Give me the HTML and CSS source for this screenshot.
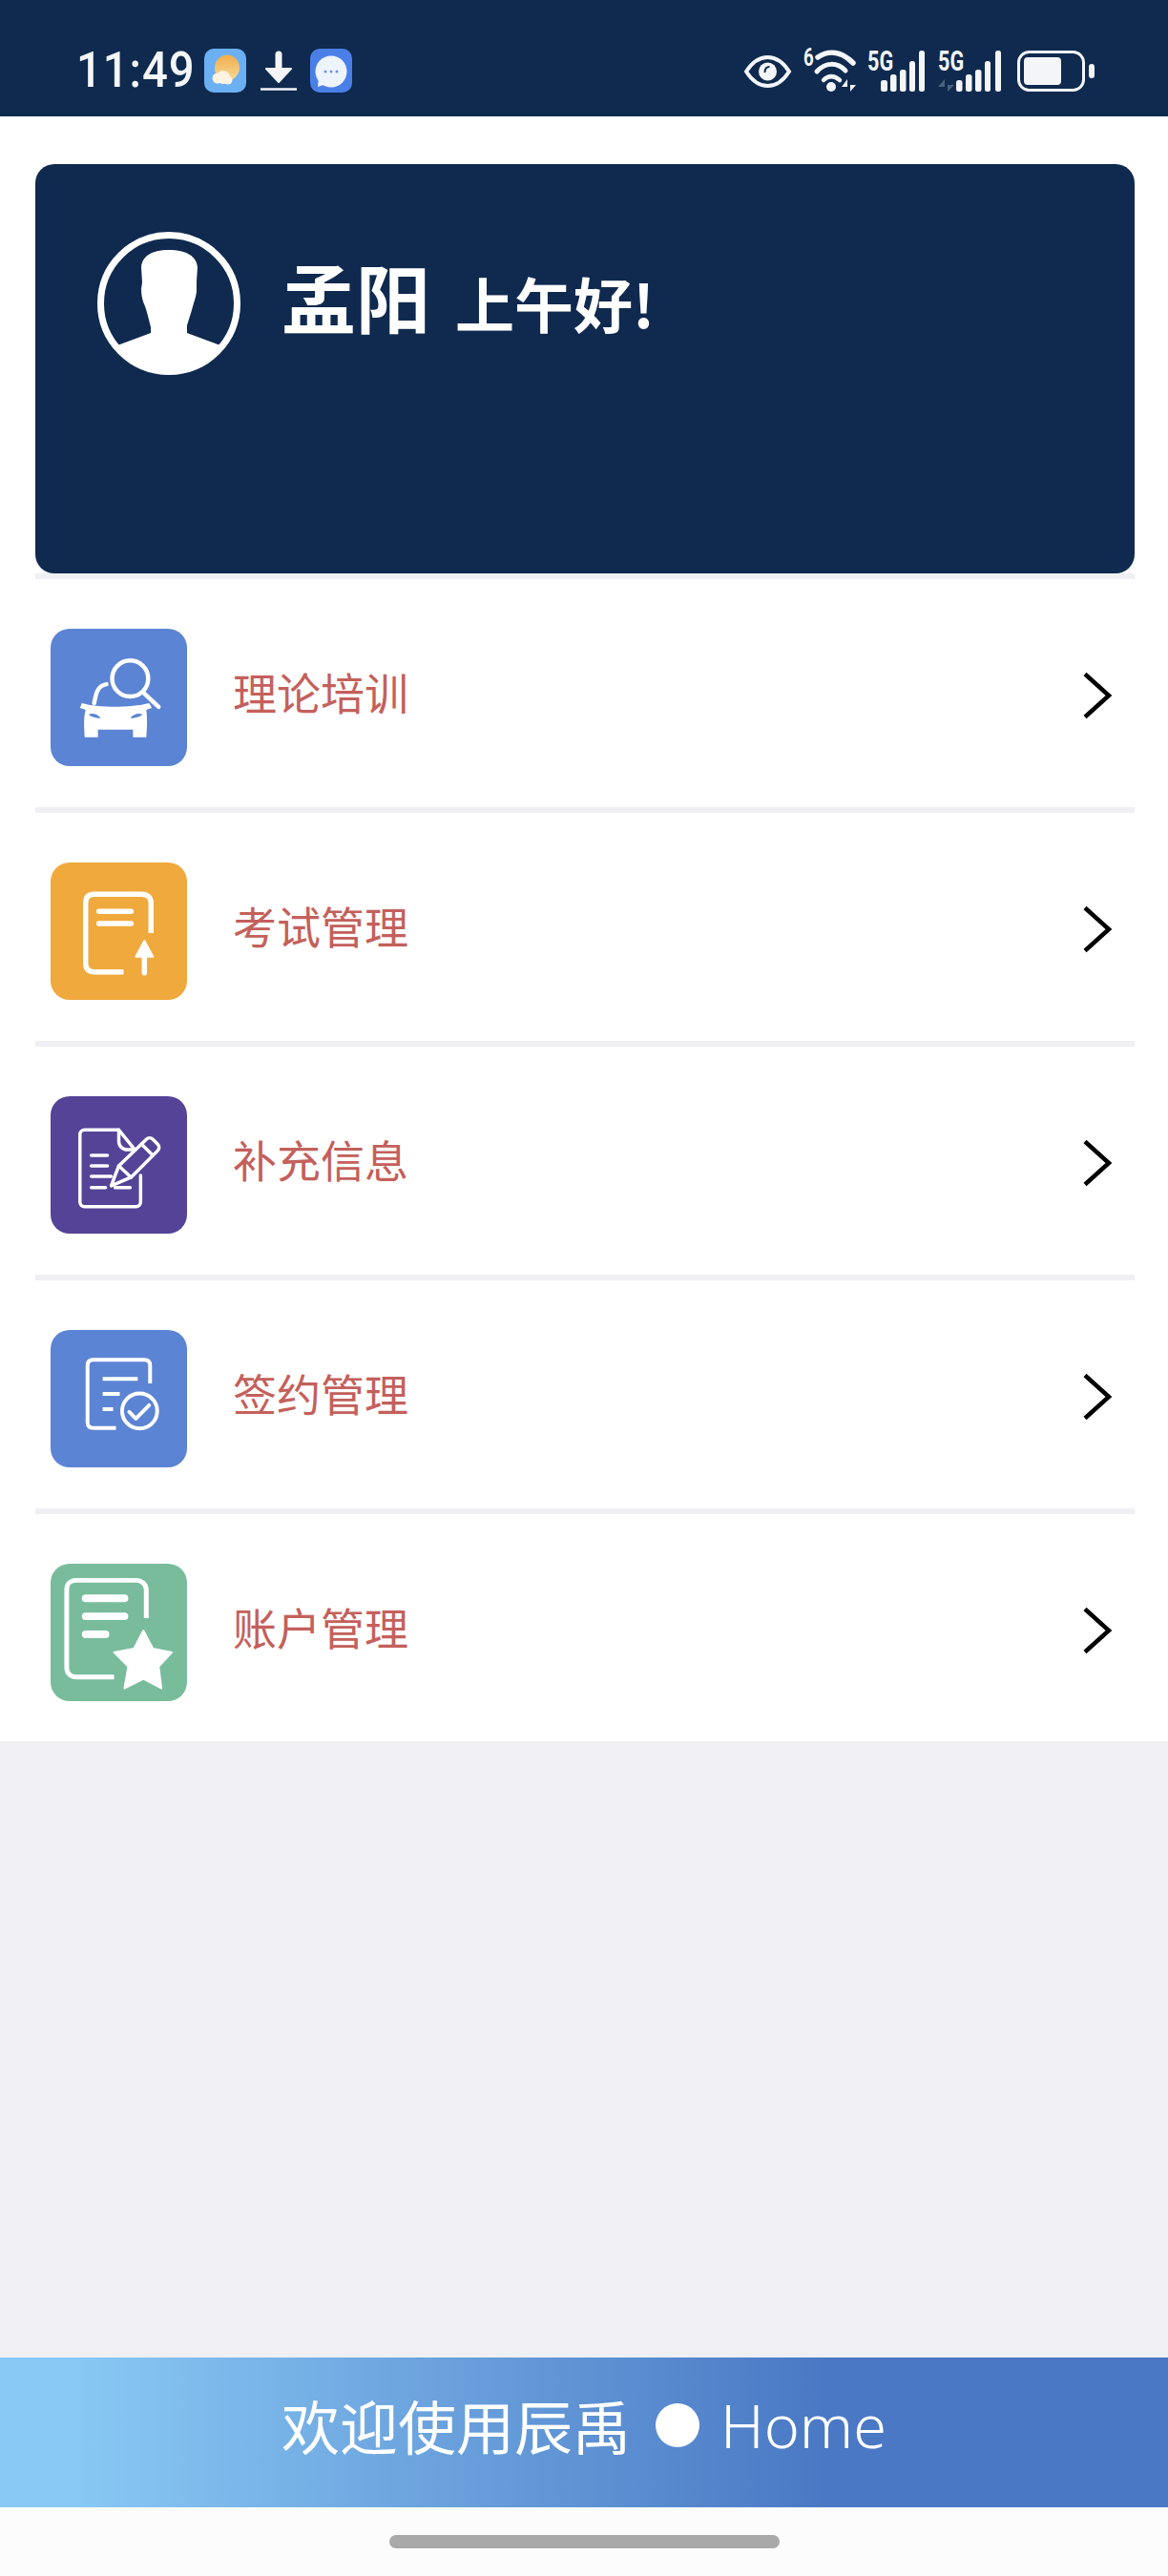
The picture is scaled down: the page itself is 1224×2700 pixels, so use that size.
FILE: index.html
```html
<!DOCTYPE html>
<html lang="zh-CN">
<head>
    <meta charset="UTF-8">
    <meta name="viewport" content="width=device-width, initial-scale=1.0">
    <title>辰禹 Home</title>
    <link rel="stylesheet" href="styles.css">
</head>
<body>

    <!-- status bar -->
    <div class="status-bar">
        <div class="status-left">
            <span class="clock">11:49</span>
            <svg class="st-app" viewBox="0 0 44 46">
                <defs>
                    <linearGradient id="sunFill" x1="0" y1="0" x2="0" y2="1">
                        <stop offset="0" stop-color="#efae4c"/>
                        <stop offset="1" stop-color="#f8d896"/>
                    </linearGradient>
                </defs>
                <rect width="44" height="46" rx="10" fill="#6cb0f4"/>
                <ellipse cx="24" cy="20" rx="13" ry="13.500" fill="url(#sunFill)"/>
                <circle cx="14" cy="31" r="5.500" fill="#fdf3e2"/>
                <circle cx="20" cy="30" r="7" fill="#fdf3e2"/>
                <circle cx="25" cy="33" r="4.500" fill="#fdf3e2"/>
            </svg>
            <svg class="st-download" viewBox="0 0 38 41">
                <path d="M19 3v16" stroke="#f3f5f8" stroke-width="7" stroke-linecap="round"/>
                <path d="M6 18h26L19 32z" fill="#f3f5f8" stroke="#f3f5f8" stroke-width="2" stroke-linejoin="round"/>
                <path d="M0 39.500h38" stroke="#f3f5f8" stroke-width="2.500"/>
            </svg>
            <svg class="st-app" viewBox="0 0 44 46">
                <rect width="44" height="46" rx="10" fill="#4b7fe8"/>
                <circle cx="22" cy="24" r="16.500" fill="#eef4fd"/>
                <path d="M9 30l-1 10 9-3z" fill="#eef4fd"/>
                <circle cx="16" cy="24" r="1.500" fill="#6b96ea"/>
                <circle cx="22" cy="24" r="1.500" fill="#6b96ea"/>
                <circle cx="28" cy="24" r="1.500" fill="#6b96ea"/>
            </svg>
        </div>
        <div class="status-right">
            <svg class="st-eye" viewBox="0 0 49 46">
                <path d="M2 24C9 13 16 9 24.500 9S40 13 47 24C40 35 33 39 24.500 39S9 35 2 24z" fill="none" stroke="#f3f5f8" stroke-width="4"/>
                <circle cx="24.500" cy="24" r="9.500" fill="#f3f5f8"/>
                <path d="M21.500 25c0-4 2-6 5-6" fill="none" stroke="#0f2a4e" stroke-width="2"/>
            </svg>
            <svg class="st-wifi" viewBox="0 0 55 46">
                <text class="st-tiny" transform="translate(0 18) scale(.72 1)">6</text>
                <path d="M15 9C27 1 40 3 52 15" fill="none" stroke="#f3f5f8" stroke-width="5.500" stroke-linecap="round"/>
                <path d="M14 24C23 14 35 14 44 23" fill="none" stroke="#f3f5f8" stroke-width="5" stroke-linecap="round"/>
                <path d="M21 33c5-5 11-5 17 0" fill="none" stroke="#f3f5f8" stroke-width="4.500" stroke-linecap="round"/>
                <circle cx="29" cy="40" r="5" fill="#f3f5f8"/>
                <path d="M46 45V32l-6 8h6zM49 32v13l6-7h-6z" fill="#f3f5f8"/>
            </svg>
            <svg class="st-signal" viewBox="0 0 61 46">
                <text class="st-tiny st-5g" transform="translate(0 23) scale(.72 1)">5G</text>
                <rect x="14" y="33" width="7" height="12" rx="2.500" fill="#f3f5f8"/>
                <rect x="24" y="27" width="6.500" height="18" rx="2.500" fill="#f3f5f8"/>
                <rect x="34" y="22" width="6.500" height="23" rx="2.500" fill="#f3f5f8"/>
                <rect x="44" y="13" width="6" height="32" rx="2.500" fill="#f3f5f8"/>
                <rect x="54" y="2" width="6" height="43" rx="2.500" fill="#f3f5f8"/>
            </svg>
            <svg class="st-signal-b" viewBox="0 0 66 46">
                <text class="st-tiny st-5g" transform="translate(0 23) scale(.72 1)">5G</text>
                <path d="M7 45V32l-7 8h7zM10 32v13l7-7h-7z" fill="#4a5f7d"/>
                <rect x="19" y="33" width="6.500" height="12" rx="2.500" fill="#f3f5f8"/>
                <rect x="29" y="27" width="6.500" height="18" rx="2.500" fill="#f3f5f8"/>
                <rect x="39" y="22" width="6.500" height="23" rx="2.500" fill="#f3f5f8"/>
                <rect x="49" y="13" width="6" height="32" rx="2.500" fill="#f3f5f8"/>
                <rect x="60" y="2" width="6" height="43" rx="2.500" fill="#f3f5f8"/>
            </svg>
            <svg class="st-battery" viewBox="0 0 81 46">
                <rect x="1.500" y="3.500" width="68" height="40" rx="11" fill="none" stroke="#f3f5f8" stroke-width="3"/>
                <rect x="7" y="9" width="39" height="29" rx="4" fill="#f3f5f8"/>
                <rect x="75" y="16" width="6" height="15" rx="3" fill="#f3f5f8"/>
            </svg>
        </div>
    </div>

    <div class="content">
        <!-- user card -->
        <div class="user-card">
            <svg class="avatar" viewBox="0 0 150 150">
                <circle cx="75" cy="75" r="71.500" fill="none" stroke="#fff" stroke-width="7"/>
                <path d="M21 119L56 106V100C54 92 52 84 50 78 47 72 46 66 46 60L47 53 46 37C47 26 56 19 75 19 94 19 104 26 105 37L104 52V63C103 70 100 77 99 82L94 98V106L129 119A70 70 0 0 1 21 119z" fill="#fff"/>
            </svg>
            <div class="greeting">
                <span class="user-name">孟阳</span>
                <span class="user-hello">上午好!</span>
            </div>
        </div>

        <!-- menu -->
        <div class="menu">
            <div class="menu-row">
                <div class="menu-icon icon-blue">
                    <svg viewBox="0 0 144 144">
                        <circle cx="84" cy="52" r="19" fill="none" stroke="#fff" stroke-width="4.500"/>
                        <path d="M98 67l16 15" stroke="#fff" stroke-width="4.500" stroke-linecap="round"/>
                        <path d="M46 78C48 68 49 60 59 58" fill="none" stroke="#fff" stroke-width="4.500" stroke-linecap="round"/>
                        <path fill-rule="evenodd" fill="#fff" d="M33 78C50 83 85 83 104 78L107 83 101 85C102 92 102 100 101 114H87V106H50V114H36C35 100 35 92 37 85L31 83zM40 90C44 93 49 94 53 94 50 90 45 88 40 90zM97 90C93 88 87 90 84 94 88 94 93 93 97 90z"/>
                    </svg>
                </div>
                <span class="menu-label">理论培训</span>
                <svg class="chevron" viewBox="0 0 28 48"><path d="M1 1.500L26 24 1 46.500" fill="none" stroke="#000" stroke-width="4.500"/></svg>
            </div>
            <div class="menu-row">
                <div class="menu-icon icon-orange">
                    <svg viewBox="0 0 144 144">
                        <path d="M77 115H46C40 115 37 112 37 106V42C37 36 40 33 46 33H96C102 33 106 36 106 42V74" fill="none" stroke="#fff" stroke-width="5.500"/>
                        <path d="M51 51H85M51 64H85" stroke="#fff" stroke-width="5.500" stroke-linecap="round"/>
                        <path d="M99 82L108 99H90z" fill="#fff" stroke="#fff" stroke-width="2" stroke-linejoin="round"/>
                        <path d="M99 96V116" stroke="#fff" stroke-width="5.500" stroke-linecap="round"/>
                    </svg>
                </div>
                <span class="menu-label">考试管理</span>
                <svg class="chevron" viewBox="0 0 28 48"><path d="M1 1.500L26 24 1 46.500" fill="none" stroke="#000" stroke-width="4.500"/></svg>
            </div>
            <div class="menu-row">
                <div class="menu-icon icon-purple">
                    <svg viewBox="0 0 144 144">
                        <g fill="none" stroke="#fff" stroke-width="3.500" stroke-linecap="round" stroke-linejoin="round">
                            <path d="M72 35H36C33 35 31 37 31 40V111C31 114 33 116 36 116H90C93 116 95 114 95 111V83"/>
                            <path d="M72 35V47C72 52 76 56 81 56H89L72 35"/>
                            <path d="M43 62H60M43 73H60M43 84H64M43 96H58M68 96H84"/>
                            <path d="M64 94L72 73 101 45C103 43 106 43 108 45L113 50C115 52 115 55 113 57L85 85z"/>
                            <path d="M72 73L85 85M96 50L108 62"/>
                        </g>
                    </svg>
                </div>
                <span class="menu-label">补充信息</span>
                <svg class="chevron" viewBox="0 0 28 48"><path d="M1 1.500L26 24 1 46.500" fill="none" stroke="#000" stroke-width="4.500"/></svg>
            </div>
            <div class="menu-row">
                <div class="menu-icon icon-blue">
                    <svg viewBox="0 0 144 144">
                        <g fill="none" stroke="#fff" stroke-width="4">
                            <path d="M69 103H45C41 103 39 101 39 97V37C39 33 41 31 45 31H99C103 31 105 33 105 37V56"/>
                            <path d="M55 51H92M55 67H73M55 83H66"/>
                            <circle cx="94" cy="85" r="18.500"/>
                            <path d="M83 86L90 93 104 79" stroke-linecap="round" stroke-linejoin="round"/>
                        </g>
                    </svg>
                </div>
                <span class="menu-label">签约管理</span>
                <svg class="chevron" viewBox="0 0 28 48"><path d="M1 1.500L26 24 1 46.500" fill="none" stroke="#000" stroke-width="4.500"/></svg>
            </div>
            <div class="menu-row">
                <div class="menu-icon icon-green">
                    <svg viewBox="0 0 144 144">
                        <path d="M67 119H27C21 119 17 115 17 109V27C17 21 21 17 27 17H90C96 17 101 21 101 27V57" fill="none" stroke="#fff" stroke-width="5"/>
                        <path d="M37 36H78M37 55H78M37 74H58" stroke="#fff" stroke-width="8" stroke-linecap="round"/>
                        <path d="M98 70L108 89 128 93 114 108 117 131 98 121 78 131 82 108 67 93 88 89z" fill="#fff" stroke="#fff" stroke-width="2" stroke-linejoin="round"/>
                    </svg>
                </div>
                <span class="menu-label">账户管理</span>
                <svg class="chevron" viewBox="0 0 28 48"><path d="M1 1.500L26 24 1 46.500" fill="none" stroke="#000" stroke-width="4.500"/></svg>
            </div>
        </div>
    </div>

    <div class="spacer"></div>

    <div class="welcome-bar">
        <span class="welcome-text">欢迎使用辰禹</span>
        <span class="welcome-dot"></span>
        <span class="welcome-home">Home</span>
    </div>

    <div class="nav-bar">
        <div class="nav-handle"></div>
    </div>

</body>
</html>
```

FILE: styles.css
```css
* {
    box-sizing: border-box;
}

body {
    margin: 0;
    width: 1224px;
    height: 2700px;
    display: flex;
    flex-direction: column;
    background: #efeff4;
    font-family: "Noto Sans CJK SC", "Noto Sans", sans-serif;
}

svg {
    display: block;
    flex-shrink: 0;
    overflow: visible;
}

/* status bar */
.status-bar {
    height: 122px;
    padding: 51px 77px 25px 80px;
    display: flex;
    justify-content: space-between;
    align-items: center;
    background: #0f2a4e;
    color: #f3f5f8;
}

.status-left,
.status-right {
    display: flex;
    align-items: center;
}

.clock {
    width: 121px;
    margin-right: 13px;
    font-family: Roboto, sans-serif;
    font-size: 52px;
    font-weight: 500;
    line-height: 46px;
    letter-spacing: 1px;
    white-space: nowrap;
    transform: scaleX(.91);
    transform-origin: left center;
}

.st-app {
    width: 44px;
    height: 46px;
}

.st-download {
    width: 38px;
    height: 41px;
    margin: 0 14px 0 15px;
}

.st-eye {
    width: 49px;
    height: 46px;
    margin-right: 13px;
}

.st-wifi {
    width: 55px;
    height: 46px;
    margin-right: 12px;
}

.st-signal {
    width: 61px;
    height: 46px;
    margin-right: 13px;
}

.st-signal-b {
    width: 66px;
    height: 46px;
    margin-right: 17px;
}

.st-battery {
    width: 81px;
    height: 46px;
}

.st-tiny {
    font-family: Roboto, sans-serif;
    font-size: 26px;
    font-weight: 700;
    fill: #f3f5f8;
}

.st-5g {
    font-size: 30px;
}

/* white part */
.content {
    background: #fff;
    padding: 50px 35px 0 37px;
}

.user-card {
    height: 429px;
    padding: 71px 0 0 65px;
    display: flex;
    align-items: flex-start;
    gap: 43px;
    background: #0f2a4e;
    border-radius: 20px;
}

.avatar {
    width: 150px;
    height: 150px;
}

.greeting {
    display: flex;
    align-items: baseline;
    gap: 26px;
    padding-top: 27px;
    color: #fff;
    font-weight: 700;
    line-height: 80px;
}

.user-name {
    font-size: 78px;
}

.user-hello {
    font-size: 62px;
}

.menu-row {
    display: flex;
    align-items: center;
    padding: 52px 25px 43px 16px;
    border-top: 6px solid #efeff4;
}

.menu-row:last-child {
    padding-bottom: 42px;
}

.menu-icon {
    width: 143px;
    height: 144px;
    border-radius: 20px;
    margin-right: 48px;
}

.menu-icon svg {
    width: 143px;
    height: 144px;
}

.icon-blue {
    background: #5c84d4;
}

.icon-orange {
    background: #f0a93c;
}

.icon-purple {
    background: #554398;
}

.icon-green {
    background: #78bc9c;
}

.menu-label {
    flex: 1;
    margin-bottom: 14px;
    color: #c4605b;
    font-size: 46px;
    line-height: 60px;
}

.chevron {
    width: 28px;
    height: 48px;
    margin-bottom: 4px;
}

.spacer {
    flex: 1;
}

/* bottom */
.welcome-bar {
    height: 157px;
    padding-bottom: 16px;
    display: flex;
    justify-content: center;
    align-items: center;
    background: linear-gradient(to right, #88c8f4 7%, #4a78c4 71%);
    color: #fff;
}

.welcome-text {
    font-size: 61px;
    font-weight: 400;
    line-height: 80px;
}

.welcome-dot {
    width: 46px;
    height: 46px;
    margin: 0 22px 0 26px;
    border-radius: 50%;
    background: #fff;
}

.welcome-home {
    font-family: "Noto Sans", sans-serif;
    font-size: 63px;
    font-weight: 300;
    line-height: 80px;
}

.nav-bar {
    height: 72px;
    padding-top: 29px;
    background: #fcfcfc;
}

.nav-handle {
    width: 409px;
    height: 14px;
    margin: 0 auto;
    border-radius: 7px;
    background: #a9a9a9;
}
```
